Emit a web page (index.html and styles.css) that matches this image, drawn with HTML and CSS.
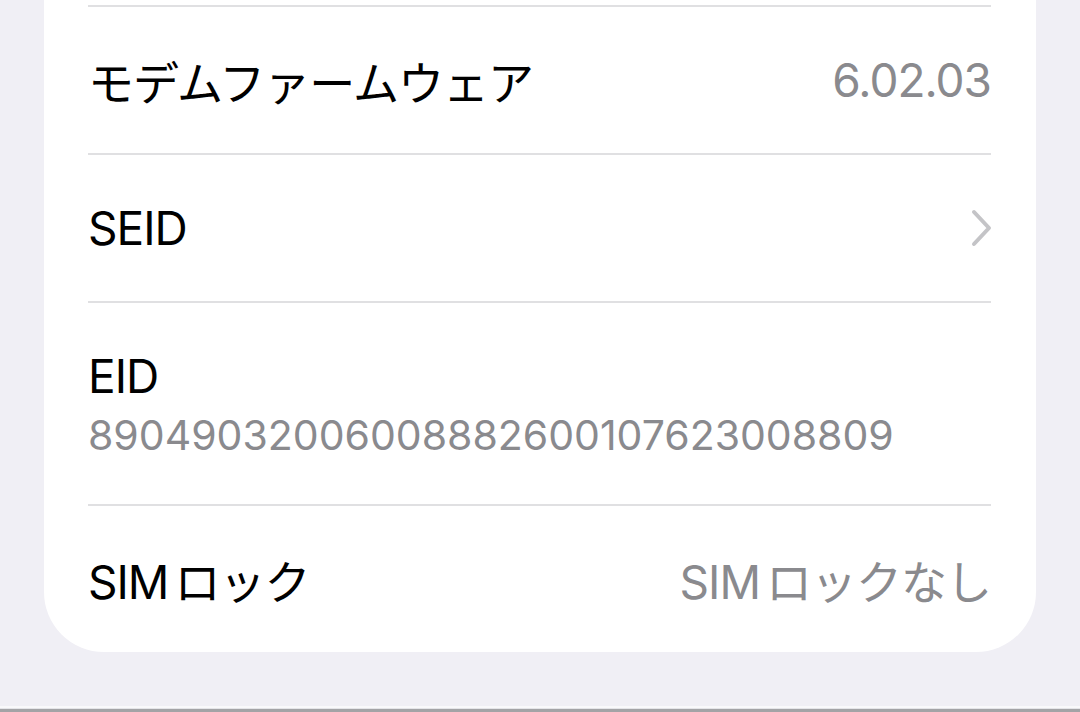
FILE: index.html
```html
<!DOCTYPE html>
<html>
	<head>
		<meta charset="UTF-8">
		<title>情報</title>
		<link rel="stylesheet" href="styles.css">
	</head>
	<body>
		<div class="page">
			<div class="card">
				<div class="row">
					<span class="label">モデムファームウェア</span>
					<span class="value">6.02.03</span>
				</div>
				<div class="row">
					<span class="label">SEID</span>
					<svg class="chevron" width="22" height="38" viewBox="0 0 22 38">
						<path d="M3 3 L18 19 L3 35" fill="none" stroke="#c4c4c7" stroke-width="4" stroke-linecap="round" stroke-linejoin="round"/>
					</svg>
				</div>
				<div class="row row-tall">
					<span class="label">EID</span>
					<span class="sub">89049032006008882600107623008809</span>
				</div>
				<div class="row">
					<span class="label"><span class="latin">SIM</span>ロック</span>
					<span class="value"><span class="latin">SIM</span>ロックなし</span>
				</div>
			</div>
			<div class="bottom-bar"></div>
		</div>
	</body>
</html>
```
FILE: styles.css
```css
*{
	margin: 0;
	padding: 0;
	box-sizing: border-box;
}

body{
	background-color: #f0eff5;
	font-family: Inter, "Noto Sans CJK JP", sans-serif;
}

.page{
	height: 712px;
	display: flex;
	flex-direction: column;
}

/* 白いカード（上は画面外へ続く） */
.card{
	margin: 0 44px;
	padding: 5px 45px 0 44px;
	background-color: #fff;
	border-radius: 0 0 60px 60px;
}

.row{
	height: 148px;
	border-top: 2px solid #e0e0e2;
	display: flex;
	align-items: center;
	justify-content: space-between;
}

.row-tall{
	height: 203px;
	flex-direction: column;
	align-items: flex-start;
	justify-content: center;
	gap: 6px;
}

.label{
	font-size: 46px;
	letter-spacing: -1px;
	color: #000;
}

.value{
	font-size: 46px;
	letter-spacing: -1px;
	color: #8a8a8e;
}

/* 英字と日本語の間のすき間 */
.latin{
	margin-right: 6px;
}

.sub{
	font-size: 41px;
	color: #8a8a8e;
}

.chevron{
	margin-right: -2px;
}

.bottom-bar{
	margin-top: auto;
	height: 6px;
	border-top: 2px solid #f9f9fb;
	border-bottom: 3px solid #a3a3a6;
	background-color: #e4e4e8;
}
```
